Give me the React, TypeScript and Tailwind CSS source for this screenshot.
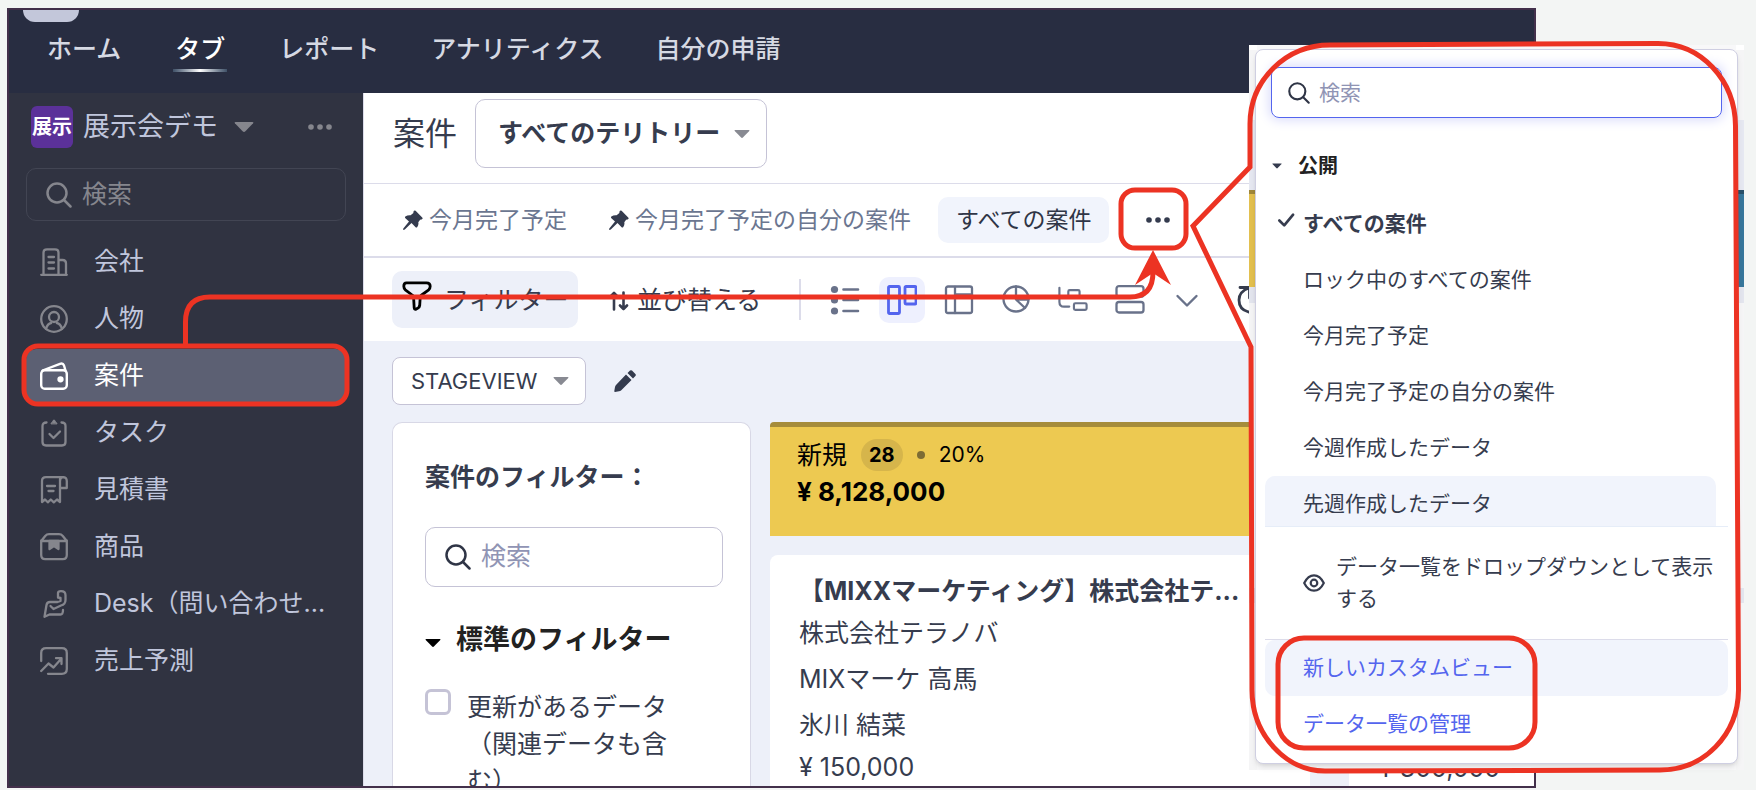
import { useState, type ReactNode } from 'react';

type IconProps = { className?: string };

function Svg({ className, children, box = 28 }: IconProps & { children: ReactNode; box?: number }) {
  return (
    <svg
      className={className}
      viewBox={`0 0 ${box} ${box}`}
      fill="none"
      stroke="currentColor"
      strokeWidth="2.3"
      strokeLinecap="round"
      strokeLinejoin="round"
      aria-hidden="true"
    >
      {children}
    </svg>
  );
}

const SearchIcon = ({ className }: IconProps) => (
  <Svg className={className} box={26}>
    <circle cx="11" cy="11" r="9.5" strokeWidth="2.5" />
    <path d="M18 18l6.5 6.5" strokeWidth="2.5" />
  </Svg>
);

const Caret = ({ className }: IconProps) => (
  <svg className={className} viewBox="0 0 20 10" fill="currentColor" aria-hidden="true">
    <path d="M1.5 0h17q1.5 0 .6 1.2l-7.7 8q-1.4 1.4-2.8 0l-7.7-8Q0 0 1.5 0z" />
  </svg>
);

const Dots = ({ className }: IconProps) => (
  <svg className={className} viewBox="0 0 24 6" fill="currentColor" aria-hidden="true">
    <circle cx="3" cy="3" r="2.8" />
    <circle cx="12" cy="3" r="2.8" />
    <circle cx="21" cy="3" r="2.8" />
  </svg>
);

const PinIcon = ({ className }: IconProps) => (
  <svg className={className} viewBox="0 0 20 20" fill="currentColor" aria-hidden="true">
    <path d="M11 .8q.8-.8 1.6 0l6.6 6.6q.9.9 0 1.7-.8.7-1.9.5l-2 2.6q.6 2.5-1 4.8-.8 1-1.7.2L8.500 13 1.800 19.600Q.6 20.200.3 19.800-.2 19.200.5 18.300L6 11.600 2.400 8.200q-.9-.9 0-1.600Q4.500 5 7.600 5.300L10.400 3Q10.200 1.600 11 .8z" />
  </svg>
);

const BuildingIcon = () => (
  <Svg className="size-7">
    <path d="M1.200 26.800h25.600M3.500 26.500V4.500q0-3.200 3.500-3.200h8q3.500 0 3.500 3.200v22M18.500 12h4q3.500 0 3.500 3.500v11M8.500 9H14M8.500 14.500H14M8.500 20.500H14" />
  </Svg>
);

const PersonIcon = () => (
  <Svg className="size-7">
    <circle cx="14" cy="14" r="12.800" />
    <circle cx="14" cy="12" r="5" />
    <path d="M6 24q1.500-5.500 5.200-6M22 24q-1.500-5.500-5.200-6" />
  </Svg>
);

const WalletIcon = () => (
  <Svg className="size-7">
    <rect x="1.200" y="8.200" width="25.600" height="18.600" rx="3.500" strokeWidth="2.400" />
    <path d="M2.500 8.500L20 1.800q3-1 4 1.700l1.500 5" strokeWidth="2.400" />
    <circle cx="20.500" cy="17.300" r="2" fill="currentColor" />
  </Svg>
);

const TaskIcon = () => (
  <Svg className="size-7">
    <path d="M6.500 3.500Q2.500 3.500 2.500 7v16q0 3.500 3.500 3.500h16q3.500 0 3.500-3.500V7q0-3.500-4-3.500M9.500 15l4 4 6.500-6.500" />
    <path d="M11 4.500q0-1 1.500-1.200Q12.800 1 14 1t1.500 2.300q1.500.2 1.500 1.200z" fill="currentColor" strokeWidth="1" />
  </Svg>
);

const QuoteIcon = () => (
  <Svg className="size-7">
    <path d="M2 26V5q0-3.800 4-3.800h16.800q4 0 4 4V12H20M20 3v23l-3-2.500-3.200 2.800-3-2.800-3 2.800L5 23.500 2 26M20 5q0-3.800 3-3.800M7 10h8M8.500 15h5" />
  </Svg>
);

const ProductIcon = () => (
  <Svg className="size-7">
    <path d="M1.200 7.500V22q0 4.200 4 4.200h17.600q4 0 4-4.200V7.500M1.200 8l4-5Q6.800 1.200 9 1.200h10q2.200 0 3.800 1.800l4 5M1.200 8h25.600" />
    <path d="M9.500 8h9v8L14 13l-4.500 3z" fill="currentColor" />
  </Svg>
);

const DeskIcon = () => (
  <Svg className="size-7">
    <path d="M18 7.500V3q0-1.800 3-1.800 4.500 0 4.500 4V10q0 4.500-4.500 5.500L13.500 19 10.500 16M18 7.500l2.500.5v3l-3 1H10q-3 0-3.500 3L4.500 26.800l5-2.300h11q2.500 0 2.500-4.500" />
  </Svg>
);

const ForecastIcon = () => (
  <Svg className="size-7">
    <path d="M1.200 14V6q0-4.800 5-4.800h15.600q5 0 5 4.800v16q0 4.800-5 4.800H8M1.200 24l7.300-7.500 5 4L21 12M16 11.200h5.500V17" />
  </Svg>
);

const views = [
  {
    name: 'リスト',
    icon: (
      <Svg className="size-[30px] shrink-0" box={30}>
        <g fill="currentColor" stroke="none">
          <circle cx="4.500" cy="4.500" r="3.600" />
          <circle cx="4.500" cy="15" r="3.600" />
          <circle cx="4.500" cy="26" r="3.600" />
        </g>
        <path d="M13.500 4.500h14.500M13.500 15h14.500M13.500 26h14.500" strokeWidth="2.600" />
      </Svg>
    ),
  },
  {
    name: 'かんばん',
    icon: (
      <Svg className="size-[30px] shrink-0" box={30}>
        <rect x="1.500" y="1.500" width="11" height="27" rx="1" strokeWidth="2.800" />
        <rect x="18" y="1.500" width="11" height="17.500" rx="1" strokeWidth="2.800" />
      </Svg>
    ),
  },
  {
    name: 'グリッド',
    icon: (
      <Svg className="size-[30px] shrink-0" box={30}>
        <rect x="2" y="1.500" width="26" height="26.500" rx="2" />
        <path d="M11 2v26M11 9.500h17" />
      </Svg>
    ),
  },
  {
    name: 'チャート',
    icon: (
      <Svg className="size-[30px] shrink-0" box={30}>
        <circle cx="15" cy="14" r="12.500" />
        <path d="M15 1.500V14.500l9 8.500M15 14.500h12.500" />
      </Svg>
    ),
  },
  {
    name: 'ツリー',
    icon: (
      <Svg className="h-[30px] w-8 shrink-0" box={32}>
        <path d="M1.500 3v15q0 5 5 5H12" />
        <rect x="11" y="5.500" width="12" height="7" rx="1.500" />
        <rect x="17" y="19.500" width="13.500" height="7" rx="1.500" />
      </Svg>
    ),
  },
  {
    name: '分割',
    icon: (
      <Svg className="size-[30px] shrink-0" box={30}>
        <rect x="1.500" y="1.200" width="27" height="10.500" rx="2.500" />
        <rect x="1.500" y="17" width="27" height="10.500" rx="2.500" />
      </Svg>
    ),
  },
  {
    name: 'その他の表示',
    icon: (
      <Svg className="size-[30px] shrink-0" box={30}>
        <path d="M5.500 11l9.500 9.500L24.500 11" strokeWidth="2.400" />
      </Svg>
    ),
  },
];

const navItems = ['ホーム', 'タブ', 'レポート', 'アナリティクス', '自分の申請'];

const modules = [
  { label: '会社', icon: <BuildingIcon /> },
  { label: '人物', icon: <PersonIcon /> },
  { label: '案件', icon: <WalletIcon /> },
  { label: 'タスク', icon: <TaskIcon /> },
  { label: '見積書', icon: <QuoteIcon /> },
  { label: '商品', icon: <ProductIcon /> },
  { label: 'Desk（問い合わせ...', icon: <DeskIcon /> },
  { label: '売上予測', icon: <ForecastIcon /> },
];

const savedViews = [
  'ロック中のすべての案件',
  '今月完了予定',
  '今月完了予定の自分の案件',
  '今週作成したデータ',
];

function TopNav() {
  return (
    <header className="relative flex h-[83px] shrink-0 items-start bg-[#282d41] pl-[38px]">
      <div className="absolute top-0 left-3.5 h-3 w-14 rounded-b-xl bg-[#c3c7da]" />
      <nav className="flex gap-[52px] pt-4">
        {navItems.map((item) => (
          <a
            key={item}
            href="#"
            className={`flex flex-col items-center text-[25px] leading-[46px] font-medium whitespace-nowrap ${
              item === 'タブ' ? 'text-white' : 'text-[#d6d9e3]'
            }`}
          >
            {item}
            {item === 'タブ' && (
              <span className="-mt-[3px] h-[3px] w-[54px] bg-linear-to-r from-[#3f5067] via-white to-[#3f5067]" />
            )}
          </a>
        ))}
      </nav>
    </header>
  );
}

function Sidebar() {
  const [active, setActive] = useState('案件');

  return (
    <aside className="flex w-[354px] shrink-0 flex-col bg-[#303341] px-[17px] pt-[13px] text-[#c0c6dc]">
      <div className="flex items-center pr-3.5 pl-[5px]">
        <span className="flex size-[42px] items-center justify-center rounded-md bg-[#5b3199] text-[20px] font-bold text-white">
          展示
        </span>
        <span className="ml-2.5 text-[27px] leading-[42px]">展示会デモ</span>
        <button type="button" aria-label="チームスペースを切り替え" className="ml-4 text-[#85868d]">
          <Caret className="h-2.5 w-5" />
        </button>
        <button type="button" aria-label="その他" className="ml-auto text-[#85868d]">
          <Dots className="h-1.5 w-6" />
        </button>
      </div>
      <label className="mt-5 flex h-[53px] items-center gap-2.5 rounded-[10px] border border-[#424553] pl-[19px] text-[#85868d]">
        <SearchIcon className="size-[26px] shrink-0" />
        <input
          type="text"
          aria-label="モジュールを検索"
          placeholder="検索"
          className="w-full min-w-0 bg-transparent text-[25px] outline-none placeholder:text-[#85868d]"
        />
      </label>
      <ul className="mt-3">
        {modules.map(({ label, icon }) => (
          <li key={label} className="flex h-[57px] items-center">
            <button
              type="button"
              onClick={() => setActive(label)}
              className={`flex h-[54px] w-full items-center gap-[26px] rounded-[10px] pl-3.5 text-[25px] whitespace-nowrap ${
                active === label ? 'bg-[#5c6073] text-white' : ''
              }`}
            >
              <span className={active === label ? 'text-white' : 'text-[#85868d]'}>{icon}</span>
              {label}
            </button>
          </li>
        ))}
      </ul>
    </aside>
  );
}

function DealToolbar() {
  return (
    <div className="flex h-[83px] shrink-0 items-center bg-white pl-7 text-[#363c4e]">
      <button
        type="button"
        className="flex h-[57px] w-[186px] shrink-0 items-center rounded-[10px] bg-[#edf0f9] pt-0.5 pl-2.5 text-[25px]"
      >
        <Svg className="-mt-2.5 mr-3 size-[30px] text-black" box={30}>
          <path
            d="M4.500 1.800h20q3.700 0 3.700 3.500 0 2-1.500 3.500L19 14.500q-.8.800-.8 2l-.5 8q-.2 2-2 2.800l-1.500.8q-2 .8-2-1.300l-.6-10.300q0-1.200-.8-2L3.300 8.800Q1.800 7.300 1.800 5.300q0-3.500 2.700-3.500z"
            strokeWidth="2.800"
          />
        </Svg>
        フィルター
      </button>
      <button type="button" className="ml-[31px] flex shrink-0 items-center gap-2 pt-0.5 text-[25px]">
        <Svg className="h-5 w-5" box={20}>
          <path d="M5 18.500V2M1.500 5.500L5 2l3.500 3.500M14.500 1.500V18M11 14.500l3.500 3.500 3.500-3.500" strokeWidth="2.600" />
        </Svg>
        並び替える
      </button>
      <div className="ml-[38px] h-[41px] w-0.5 shrink-0 bg-[#dcdcea]" />
      <div className="ml-[21px] flex gap-[11px]">
        {views.map(({ name, icon }) => (
          <button
            key={name}
            type="button"
            aria-label={name}
            className={`flex size-[46px] shrink-0 items-center justify-center rounded-[10px] ${
              name === 'かんばん' ? 'bg-[#eef0fe] text-[#5465ee]' : 'text-[#69728a]'
            }`}
          >
            {icon}
          </button>
        ))}
      </div>
      <button type="button" aria-label="更新" className="ml-[26px] shrink-0">
        <Svg className="size-[30px]" box={30}>
          <path d="M13 3Q3 6.500 3 15q0 9.500 9.500 12H16M4 2.500h9.500V13" strokeWidth="2.800" />
        </Svg>
      </button>
    </div>
  );
}

function FilterPanel() {
  return (
    <section className="w-[359px] shrink-0 rounded-t-[10px] border border-b-0 border-[#d8d8e6] bg-white pt-9 pl-8">
      <h2 className="text-[25px] leading-[36px] font-bold text-[#363c4e]">案件のフィルター：</h2>
      <label className="mt-8 flex h-[60px] w-[298px] items-center gap-2.5 rounded-[10px] border border-[#c5c3d6] pl-[19px] text-[#2f3546]">
        <SearchIcon className="size-[26px] shrink-0" />
        <input
          type="text"
          aria-label="フィルターを検索"
          placeholder="検索"
          className="w-full min-w-0 bg-transparent text-[25px] outline-none placeholder:text-[#9094b4]"
        />
      </label>
      <h3 className="mt-[34px] flex items-center gap-[15px] text-[27px] leading-[38px] font-bold text-[#222]">
        <Caret className="mt-1.5 h-2 w-4 text-black" />
        標準のフィルター
      </h3>
      <label className="mt-[30px] flex items-start gap-4 text-[25px] leading-[37px] text-[#363c4e]">
        <input
          type="checkbox"
          className="size-[26px] shrink-0 appearance-none rounded-md border-3 border-[#c5c3d6] bg-white checked:bg-[#5465ee]"
        />
        <span className="w-[215px]">更新があるデータ（関連データも含む）</span>
      </label>
    </section>
  );
}

function KanbanColumn() {
  return (
    <section className="flex w-[540px] shrink-0 flex-col">
      <div className="h-[114px] shrink-0 rounded-t border-t-5 border-[#a68c3b] bg-[#edc951] px-[27px] pt-[9px] text-black">
        <div className="flex items-center text-[25px] leading-[38px]">
          新規
          <span className="ml-3.5 rounded-full bg-[#d6b54b] px-2 text-[20px] leading-8 font-bold">28</span>
          <span className="mx-3.5 size-2 rounded-full bg-[#7d6c34]" />
          <span className="text-[21px]">20%</span>
        </div>
        <div className="text-[26px] leading-[36px] font-bold">¥ 8,128,000</div>
      </div>
      <article className="mt-[19px] flex-1 rounded-t-lg bg-white px-[29px] pt-[18px] text-[25px] whitespace-nowrap text-[#363c4e]">
        <h3 className="leading-[36px] font-bold">【MIXXマーケティング】株式会社テ...</h3>
        <p className="mt-1.5 leading-[36px]">株式会社テラノバ</p>
        <p className="mt-2.5 leading-[36px]">MIXマーケ 高馬</p>
        <p className="mt-2.5 leading-[36px]">氷川 結菜</p>
        <p className="mt-1.5 leading-[36px]">¥ 150,000</p>
      </article>
    </section>
  );
}

function NextColumn() {
  return (
    <section className="flex w-[540px] shrink-0 flex-col justify-end bg-white pl-[30px]">
      <p className="text-[25px] leading-[36px] text-[#363c4e]">¥ 300,000</p>
    </section>
  );
}

function MainArea() {
  return (
    <main className="flex min-w-0 flex-1 flex-col overflow-hidden border-l border-[#dcdcea] bg-[#edf0f9]">
      <div className="flex h-[91px] shrink-0 items-start border-b border-[#dcdcea] bg-white pt-1.5 pl-[29px] text-[#363c4e]">
        <h1 className="text-[32px] leading-[70px]">案件</h1>
        <button
          type="button"
          className="ml-[18px] flex h-[69px] w-[292px] items-center justify-between rounded-[10px] border border-[#c5c3d6] pr-4 pl-[22px] text-[25px] font-bold"
        >
          すべてのテリトリー
          <Caret className="h-2.5 w-4 text-[#888a92]" />
        </button>
      </div>
      <div className="flex h-[74px] shrink-0 items-center border-b-2 border-[#dcdcea] bg-white pl-[39px] text-[23px] whitespace-nowrap text-[#6b7690]">
        <a href="#" className="flex items-center gap-1.5">
          <PinIcon className="size-5 text-[#343b4e]" />
          今月完了予定
        </a>
        <a href="#" className="ml-[42px] flex items-center gap-1.5">
          <PinIcon className="size-5 text-[#343b4e]" />
          今月完了予定の自分の案件
        </a>
        <a
          href="#"
          className="ml-[27px] flex h-[46px] items-center rounded-[10px] bg-[#f1f4fc] px-[18px] text-[#2f3546]"
        >
          すべての案件
        </a>
        <button type="button" aria-label="データ一覧" className="ml-[37px] text-[#343b4e]">
          <Dots className="h-1.5 w-6" />
        </button>
      </div>
      <DealToolbar />
      <div className="flex shrink-0 items-center pt-4 pl-7">
        <button
          type="button"
          className="flex h-12 items-center gap-[15px] rounded-lg border border-[#c5c3d6] bg-white pr-4 pl-[18px] text-[22px] text-[#363c4e]"
        >
          STAGEVIEW
          <Caret className="h-2.5 w-4 text-[#888a92]" />
        </button>
        <button type="button" aria-label="表示を編集" className="ml-7 text-[#343b4e]">
          <svg className="size-[22px]" viewBox="0 0 22 22" fill="currentColor" aria-hidden="true">
            <path d="M12 4.500l5.500 5.500L7 20.500q-.8.700-2 .8l-4 .6q-.8 0-.7-.8L1 17q.2-1.200 1-2zM13.500 3L16 .6q1-.9 2 0l3.400 3.400q.9 1 0 2L19 8.500z" />
          </svg>
        </button>
      </div>
      <div className="mt-[17px] flex min-h-0 flex-1 pl-7">
        <FilterPanel />
        <div className="ml-[19px] flex gap-[39px]">
          <KanbanColumn />
          <NextColumn />
        </div>
      </div>
    </main>
  );
}

// Slices of the board that stay visible on both sides of the open menu.
function BackdropStrip({ side }: { side: 'left' | 'right' }) {
  const left = side === 'left';
  return (
    <div className="flex w-2 shrink-0 flex-col overflow-hidden bg-[#f5f5f6]">
      <div className="h-[75px] shrink-0 border-t-5 border-white" />
      <div className="h-[70px] shrink-0 bg-[#e6e8f1]" />
      <div
        className={`h-[97px] shrink-0 border-t-4 ${
          left ? 'border-[#a08739] bg-[#e3c04f]' : 'border-[#29506a] bg-[#37769b]'
        }`}
      />
      <div className="h-4 shrink-0 bg-[#e3e5ee]" />
      <div className="h-[285px] shrink-0" />
      <div className="h-[15px] shrink-0 bg-[#e3e5ee]" />
    </div>
  );
}

function ViewMenu() {
  const [query, setQuery] = useState('');

  return (
    <div className="absolute top-[45px] right-3 flex h-[725px] w-[495px] bg-[#f8f8f9]">
      <BackdropStrip side="left" />
      <div className="z-10 -mx-0.5 mt-1 mb-1.5 flex min-w-0 flex-1 flex-col rounded-lg border border-[#cfcfe2] bg-white text-[21px] text-[#363c4e] shadow-md">
        <label className="mx-[15px] mt-[17px] flex h-[51px] shrink-0 items-center gap-[9px] rounded-lg border border-[#5465ee] pl-4 text-[#2f3546] shadow-[0_0_12px_2px_#d9dbfb]">
          <SearchIcon className="size-[22px] shrink-0" />
          <input
            type="text"
            aria-label="データ一覧を検索"
            placeholder="検索"
            value={query}
            onChange={(e) => setQuery(e.target.value)}
            className="w-full min-w-0 bg-transparent outline-none placeholder:text-[#9094b4]"
          />
        </label>
        <h2 className="mt-[31px] ml-4 flex items-center gap-4 text-[20px] leading-[34px] font-bold text-[#222]">
          <Caret className="h-1.5 w-2.5 text-[#343b4e]" />
          公開
        </h2>
        <ul className="mt-[13px]">
          <li>
            <button type="button" className="flex h-14 w-full items-center gap-2 pl-[21px] font-bold">
              <Svg className="-mt-2 h-4 w-[18px]" box={18}>
                <path d="M1.500 9.500l5.500 5.500L17 3" strokeWidth="3" />
              </Svg>
              すべての案件
            </button>
          </li>
          {savedViews.filter((v) => v.includes(query)).map((v) => (
            <li key={v}>
              <button type="button" className="flex h-14 w-full items-center pl-[47px]">{v}</button>
            </li>
          ))}
        </ul>
        <div className="mx-[9px] flex h-[51px] shrink-0 flex-col border-b border-[#e6edf8]">
          <button
            type="button"
            className="mr-3 flex flex-1 items-center rounded-t-[10px] bg-[#f1f4fc] pt-1.5 pl-[38px]"
          >
            先週作成したデータ
          </button>
        </div>
        <div className="mx-[9px] flex h-[113px] shrink-0 items-center border-b border-[#dcdcea]">
          <button type="button" className="flex items-center gap-[11px] pl-[38px] text-left leading-8">
            <Svg className="size-[22px] shrink-0" box={22}>
              <path d="M1.200 11Q5 3.300 11 3.300T20.800 11Q17 18.700 11 18.700T1.200 11z" strokeWidth="2.200" />
              <circle cx="11" cy="11" r="3.300" strokeWidth="2.200" />
            </Svg>
            <span>データ一覧をドロップダウンとして表示する</span>
          </button>
        </div>
        <div className="mx-[9px] text-[#5465ee]">
          <a href="#" className="flex h-14 items-center rounded-[10px] bg-[#f1f4fc] pl-[38px]">
            新しいカスタムビュー
          </a>
          <a href="#" className="flex h-14 items-center pl-[38px]">
            データ一覧の管理
          </a>
        </div>
      </div>
      <BackdropStrip side="right" />
    </div>
  );
}

function Callouts() {
  return (
    <svg
      className="pointer-events-none absolute inset-0 z-20 h-full w-full"
      fill="none"
      stroke="#ec3323"
      strokeWidth="5"
      aria-hidden="true"
    >
      <rect x="24" y="346" width="323" height="58" rx="14" />
      <path d="M185.500 344V322Q185.500 297 210 297H1130Q1153 297 1153 272" />
      <path d="M1153 250L1171 285 1153 273 1135 285z" fill="#ec3323" stroke="none" />
      <rect x="1121" y="190" width="65" height="58" rx="14" />
      <path d="M1250 167V124C1250 80 1286 45 1330 45L1657 43.500C1701 43 1735 80 1735.500 126L1738.500 690C1738 735 1704 770 1660 770L1325 771C1286 771 1252 735 1252 690L1251 347 1193 226z" />
      <rect x="1278" y="638" width="257" height="110" rx="26" />
    </svg>
  );
}

export default function App() {
  return (
    <div className="relative flex h-screen overflow-hidden bg-[#f3f5f4] pt-2 pb-0.5 pl-[7px] font-['Inter','Noto_Sans_CJK_JP',sans-serif]">
      <div className="mr-[220px] flex min-w-0 flex-1 flex-col border-2 border-[#43304b]">
        <TopNav />
        <div className="flex min-h-0 flex-1">
          <Sidebar />
          <MainArea />
        </div>
      </div>
      <ViewMenu />
      <Callouts />
    </div>
  );
}
